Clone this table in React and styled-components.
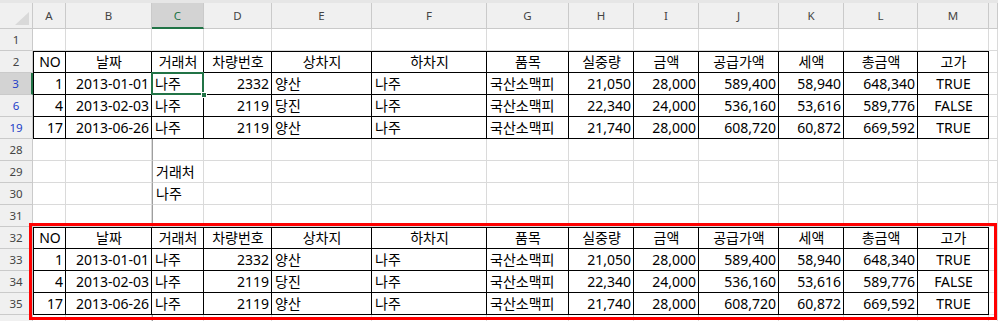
import styled, { createGlobalStyle, css } from "styled-components";

const GRID = "#dadada";
const HEAD_LINE = "#cacaca";
const GREEN = "#217346";

const WIDTHS = [33, 86, 52, 68, 100, 115, 82, 65, 65, 80, 65, 74, 71];
const LETTERS = ["A", "B", "C", "D", "E", "F", "G", "H", "I", "J", "K", "L", "M"];
const TEMPLATE = `33px ${WIDTHS.map((w) => `${w}px`).join(" ")} 1fr`;
const ALIGN = ["right", "right", "left", "right", "left", "left", "left", "right", "right", "right", "right", "right", "center"];

const HEAD = ["NO", "날짜", "거래처", "차량번호", "상차지", "하차지", "품목", "실중량", "금액", "공급가액", "세액", "총금액", "고가"];
const RECORDS = [
  ["1", "2013-01-01", "나주", "2332", "양산", "나주", "국산소맥피", "21,050", "28,000", "589,400", "58,940", "648,340", "TRUE"],
  ["4", "2013-02-03", "나주", "2119", "당진", "나주", "국산소맥피", "22,340", "24,000", "536,160", "53,616", "589,776", "FALSE"],
  ["17", "2013-06-26", "나주", "2119", "양산", "나주", "국산소맥피", "21,740", "28,000", "608,720", "60,872", "669,592", "TRUE"],
];

// row 36 is only a sliver at the bottom edge, its number is out of view
const ROWS = [
  { n: 1 },
  { n: 2, cells: HEAD, framed: "head" },
  { n: 3, cells: RECORDS[0], framed: "body", filtered: true, active: true },
  { n: 6, cells: RECORDS[1], framed: "body", filtered: true },
  { n: 19, cells: RECORDS[2], framed: "body", filtered: true },
  { n: 28, guide: true },
  { n: 29, cells: [null, null, "거래처"], guide: true },
  { n: 30, cells: [null, null, "나주"], guide: true },
  { n: 31, guide: true },
  { n: 32, cells: HEAD, framed: "head" },
  { n: 33, cells: RECORDS[0], framed: "body" },
  { n: 34, cells: RECORDS[1], framed: "body" },
  { n: 35, cells: RECORDS[2], framed: "body" },
  { n: 36, guide: true, hidden: true },
];

const GlobalStyle = createGlobalStyle`
  html, body {
    margin: 0;
    padding: 0;
    background: #ffffff;
    overflow: hidden;
  }
  body {
    font-family: "Noto Sans", "Noto Sans CJK KR", sans-serif;
  }
  *, *::before, *::after {
    box-sizing: border-box;
  }
`;

export default function App() {
  return (
    <>
      <GlobalStyle />
      <Sheet>
        <TopStrip />
        <ColumnBar>
          <Corner>
            <svg width="14" height="13" viewBox="0 0 14 13">
              <path d="M14 0 L14 13 L0 13 Z" fill="#d9d9d9" />
            </svg>
          </Corner>
          {LETTERS.map((l) => (
            <ColumnHead key={l} $active={l === "C"}>{l}</ColumnHead>
          ))}
          <ColumnHead />
        </ColumnBar>

        {ROWS.map((r) => (
          <Row key={r.n}>
            <RowHead $filtered={r.filtered} $active={r.active}>{r.hidden ? null : r.n}</RowHead>
            {LETTERS.map((l, i) => (
              <Cell
                key={l}
                $align={r.framed === "head" ? "center" : ALIGN[i]}
                $framed={!!r.framed}
                $top={r.framed === "head"}
                $left={!!r.framed && i === 0}
                $guide={r.guide && i === 2}
                $selected={r.active && i === 2}
              >
                {r.cells?.[i]}
              </Cell>
            ))}
            <Cell />
          </Row>
        ))}

        <Highlight />
      </Sheet>
    </>
  );
}

const Sheet = styled.div`
  position: relative;
  width: 998px;
  height: 321px;
  overflow: hidden;
  background: #ffffff;
`;

const TopStrip = styled.div`
  height: 3px;
  background: #e6e6e6;
`;

const ColumnBar = styled.div`
  display: grid;
  grid-template-columns: ${TEMPLATE};
  height: 26px;
`;

const Corner = styled.div`
  display: flex;
  align-items: flex-end;
  justify-content: flex-end;
  padding: 0 3px 3px 0;
  background: #f0f0f0;
  border-right: 1px solid ${HEAD_LINE};
  border-bottom: 1px solid ${HEAD_LINE};
`;

const ColumnHead = styled.div`
  display: flex;
  align-items: center;
  justify-content: center;
  background: #f0f0f0;
  border-right: 1px solid ${HEAD_LINE};
  border-bottom: 1px solid ${HEAD_LINE};
  font-size: 11.5px;
  color: #444444;

  ${(p) =>
    p.$active &&
    css`
      background: #d3d3d3;
      color: ${GREEN};
      border-bottom: 2px solid ${GREEN};
    `}
`;

const Row = styled.div`
  display: grid;
  grid-template-columns: ${TEMPLATE};
  height: 22px;
`;

const RowHead = styled.div`
  display: flex;
  align-items: center;
  justify-content: center;
  background: #f0f0f0;
  border-right: 1px solid ${HEAD_LINE};
  border-bottom: 1px solid ${HEAD_LINE};
  font-size: 11.5px;
  color: ${(p) => (p.$filtered ? "#2340c8" : "#444444")};

  ${(p) =>
    p.$active &&
    css`
      background: #d3d3d3;
      border-right: 2px solid ${GREEN};
    `}
`;

const Cell = styled.div`
  display: flex;
  align-items: flex-end;
  justify-content: ${(p) =>
    p.$align === "right" ? "flex-end" : p.$align === "center" ? "center" : "flex-start"};
  padding: 0 2px 1px 3px;
  border-right: 1px solid ${(p) => (p.$framed ? "#000000" : GRID)};
  border-bottom: 1px solid ${(p) => (p.$framed ? "#000000" : GRID)};
  border-top: ${(p) => (p.$top ? "1px solid #000000" : "none")};
  border-left: ${(p) => (p.$left ? "1px solid #000000" : p.$guide ? "1px solid #9e9e9e" : "none")};
  font-size: 14px;
  line-height: 18px;
  color: #000000;
  white-space: nowrap;

  ${(p) =>
    p.$selected &&
    css`
      position: relative;
      z-index: 2;

      &::after {
        content: "";
        position: absolute;
        left: -1px;
        top: -1px;
        right: -1px;
        bottom: -1px;
        border: 2px solid ${GREEN};
      }

      &::before {
        content: "";
        position: absolute;
        right: -4px;
        bottom: -4px;
        width: 6px;
        height: 6px;
        background: ${GREEN};
        border: 1px solid #ffffff;
        z-index: 1;
      }
    `}
`;

const Highlight = styled.div`
  position: absolute;
  left: 29px;
  top: 223px;
  width: 968px;
  height: 97px;
  border: 3px solid #ff0000;
  pointer-events: none;
`;
